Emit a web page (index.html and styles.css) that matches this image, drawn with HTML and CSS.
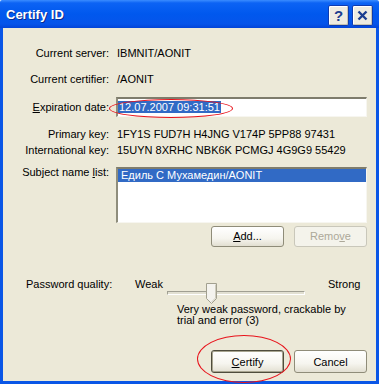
FILE: index.html
```html
<!DOCTYPE html>
<html>
    <head>
        <meta charset="UTF-8" />
        <title>Certify ID</title>
        <link rel="stylesheet" href="styles.css">
    </head>
    <body>
        <div class="window">
            <div class="titlebar">
                <span class="title">Certify ID</span>
                <div class="caption">
                    <span class="cap-btn help">?</span>
                    <span class="cap-btn">
                        <svg width="11" height="11" viewBox="0 0 11 11">
                            <path d="M1.5 1.5 L9.5 9.5 M9.5 1.5 L1.5 9.5" stroke="#1B3D8F" stroke-width="2.4" fill="none" />
                        </svg>
                    </span>
                </div>
            </div>
            <div class="client">
                <div class="row r-server">
                    <span class="label">Current server:</span>
                    <span class="value">IBMNIT/AONIT</span>
                </div>
                <div class="row r-certifier">
                    <span class="label">Current certifier:</span>
                    <span class="value">/AONIT</span>
                </div>
                <div class="row r-expiry">
                    <span class="label"><u>E</u>xpiration date:</span>
                    <div class="input"><span class="sel">12.07.2007 09:31:51</span></div>
                </div>
                <div class="row r-primary">
                    <span class="label">Primary key:</span>
                    <span class="value">1FY1S FUD7H H4JNG V174P 5PP88 97431</span>
                </div>
                <div class="row r-intl">
                    <span class="label">International key:</span>
                    <span class="value">15UYN 8XRHC NBK6K PCMGJ 4G9G9 55429</span>
                </div>
                <div class="row r-subject">
                    <span class="label">Subject name <u>l</u>ist:</span>
                    <div class="listbox">
                        <div class="item selected">Едиль С Мухамедин/AONIT</div>
                    </div>
                </div>
                <div class="row r-listbtns">
                    <span></span>
                    <div class="btns">
                        <span class="btn"><u>A</u>dd...</span>
                        <span class="btn disabled">Remo<u>v</u>e</span>
                    </div>
                </div>
                <div class="quality">
                    <span class="q-label">Password quality:</span>
                    <span>Weak</span>
                    <div class="slider">
                        <div class="track"></div>
                        <svg class="thumb" width="11" height="21" viewBox="0 0 11 21">
                            <path d="M0.5 0.5 H10.5 V15.5 L5.5 20.5 L0.5 15.5 Z" fill="#F4F3EE" stroke="#A2A08F" />
                            <path d="M9.5 1.5 V15 L5.5 19" stroke="#CFCDBE" fill="none" />
                        </svg>
                    </div>
                    <span class="strong">Strong</span>
                </div>
                <div class="desc">Very weak password, crackable by<br>trial and error (3)</div>
                <div class="dialog-btns">
                    <span class="btn default"><u>C</u>ertify</span>
                    <span class="btn">Cancel</span>
                </div>
                <div class="mark mark-date"></div>
                <div class="mark mark-certify"></div>
            </div>
        </div>
    </body>
</html>
```

FILE: styles.css
```css
body{
    margin: 0;
    font-family: "Liberation Sans", Arial, sans-serif;
    font-size: 11px;
    color: #000;
}
.window{
    width: 379px;
    height: 384px;
    display: flex;
    flex-direction: column;
}
.titlebar{
    height: 28px;
    flex: none;
    display: flex;
    align-items: center;
    justify-content: space-between;
    padding: 0 6px 0 6px;
    background: linear-gradient(to bottom, #3A8CFF 0px, #0C63F4 3px, #0058EE 14px, #0554EA 24px, #0344D8 28px);
    border-radius: 2px 2px 0 0;
}
.title{
    color: #fff;
    font-weight: bold;
    font-size: 13px;
    text-shadow: 1px 1px 0 #0A2C8C;
    margin-top: 1px;
}
.caption{
    display: flex;
    gap: 3px;
    margin-top: 2px;
}
.cap-btn{
    width: 21px;
    height: 21px;
    box-sizing: border-box;
    border: 1px solid #0D3BB0;
    box-shadow: inset 1px 1px 0 #fff, inset -1px -1px 0 #C6C3B1;
    background: #EDEBE1;
    display: flex;
    align-items: center;
    justify-content: center;
    border-radius: 2px;
}
.help{
    color: #1B3D8F;
    font-weight: bold;
    font-size: 15px;
}
.client{
    flex: 1;
    position: relative;
    background: #ECE9D8;
    border: 3px solid #0A56E6;
    border-top: 0;
}
.row{
    display: grid;
    grid-template-columns: 106px 251px;
    column-gap: 7px;
    align-items: center;
    line-height: 13px;
}
.label{
    text-align: right;
}
.value{
    padding-left: 1px;
}
.r-server{ margin-top: 19px; }
.r-certifier{ margin-top: 13px; }
.r-expiry{ margin-top: 11px; }
.r-primary{ margin-top: 9px; line-height: 16px; }
.r-intl{ line-height: 16px; }
.r-subject{ margin-top: 9px; align-items: start; }
.r-subject .label{ line-height: 11px; }
.r-listbtns{ margin-top: 3px; }
.input{
    height: 20px;
    box-sizing: border-box;
    background: #fff;
    border-style: solid;
    border-width: 2px 1px 1px 2px;
    border-color: #7E7C6C #F7F6F0 #F7F6F0 #8F8D7C;
    padding: 1px 0 0 0;
    line-height: 14px;
}
.sel{
    background: #316AC5;
    color: #fff;
    padding: 0 1px;
}
.listbox{
    height: 56px;
    box-sizing: border-box;
    background: #fff;
    border-style: solid;
    border-width: 2px 1px 1px 2px;
    border-color: #7E7C6C #F7F6F0 #F7F6F0 #8F8D7C;
}
.item{
    height: 13px;
    line-height: 13px;
    padding-left: 3px;
}
.selected{
    background: #316AC5;
    color: #fff;
}
.btns, .dialog-btns{
    display: flex;
    justify-content: flex-end;
    gap: 10px;
}
.btn{
    width: 73px;
    height: 21px;
    box-sizing: border-box;
    display: flex;
    align-items: center;
    justify-content: center;
    border: 1px solid #8F8C79;
    border-radius: 3px;
    background: linear-gradient(to bottom, #FFFFFF 0%, #F6F5EF 60%, #E2DFD1 100%);
}
.btn.disabled{
    color: #ACA899;
    border-color: #C9C7BA;
    background: #F4F3EB;
}
.btn.default{
    border-color: #4E4C3C;
    box-shadow: inset 0 0 0 1px #A8A590;
}
.quality{
    margin-top: 31px;
    display: grid;
    grid-template-columns: 109px 32px 138px auto;
    align-items: start;
    padding-left: 23px;
    line-height: 13px;
}
.slider{
    position: relative;
    height: 21px;
    margin-top: 5px;
}
.track{
    margin-top: 8px;
    height: 4px;
    box-sizing: border-box;
    border-style: solid;
    border-width: 1px;
    border-color: #A09F92 #FFFFFF #FFFFFF #A09F92;
    background: #E2E0D2;
}
.thumb{
    position: absolute;
    left: 39px;
    top: 0;
}
.strong{
    margin-left: 23px;
}
.desc{
    padding-left: 174px;
    line-height: 11px;
}
.dialog-btns{
    margin-top: 24px;
    padding-right: 9px;
}
.dialog-btns .btn{
    height: 23px;
}
.mark{
    position: absolute;
    border: 1px solid #E8141C;
    border-radius: 50%;
}
.mark-date{
    left: 106px;
    top: 71px;
    width: 122px;
    height: 17px;
}
.mark-certify{
    left: 194px;
    top: 307px;
    width: 92px;
    height: 46px;
}
```
